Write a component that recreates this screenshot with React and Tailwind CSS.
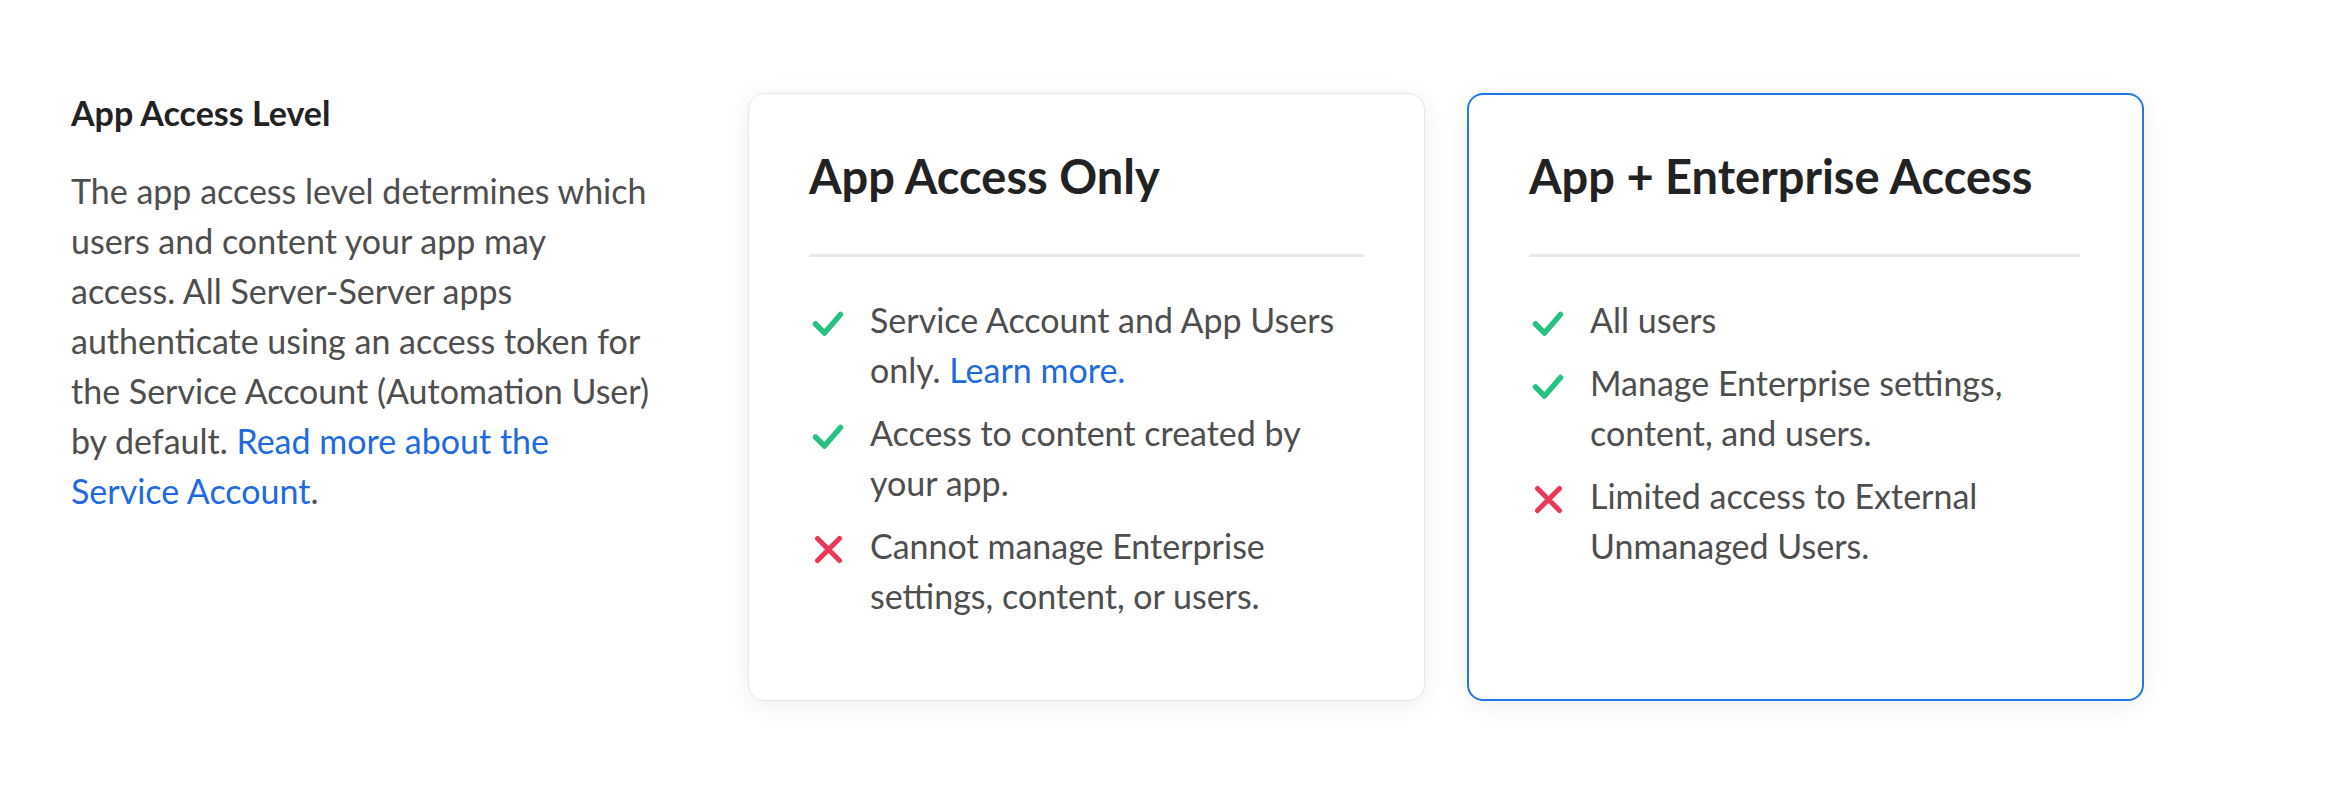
import React from "react";

const Check = () => (
  <svg width="36" height="36" viewBox="0 0 36 36" fill="none">
    <path
      d="M6.5 22L15.5 31L31.5 12.5"
      stroke="#26c281"
      strokeWidth="5.5"
      strokeLinecap="round"
      strokeLinejoin="round"
    />
  </svg>
);

const Cross = () => (
  <svg width="36" height="36" viewBox="0 0 36 36" fill="none">
    <path
      d="M8.5 10.5L30.5 32.5M30.5 10.5L8.5 32.5"
      stroke="#ed3757"
      strokeWidth="5"
      strokeLinecap="round"
    />
  </svg>
);

const Item = ({ ok, children }) => (
  <li className="flex">
    <div className="w-[61px] shrink-0 pt-[7px]">{ok ? <Check /> : <Cross />}</div>
    <div className="flex-1">{children}</div>
  </li>
);

const Card = ({ title, selected, children }) => (
  <div
    className={
      selected
        ? "w-[677px] rounded-[16px] border-2 border-[#2277e6] bg-white pl-[60px] pr-[62px] pt-[53px] pb-[78px] shadow-[0_4px_24px_rgba(0,0,0,0.07)]"
        : "w-[677px] rounded-[16px] border border-[#e6e6e6] bg-white pl-[60px] pr-[60px] pt-[54px] pb-[79px] shadow-[0_4px_24px_rgba(0,0,0,0.07)]"
    }
  >
    <h3 className="text-[47px] leading-[56px] font-bold text-[#222222]">{title}</h3>
    <div className="mt-[50px] h-[3px] bg-[#e8e8e8]" />
    <ul className="mt-[38px] flex flex-col gap-[13px] text-[34px] leading-[50px] text-[#4e4e4e]">
      {children}
    </ul>
  </div>
);

export default function App() {
  return (
    <div
      className="min-h-[790px] bg-white pl-[71px] pt-[93px]"
      style={{ fontFamily: "Lato, 'Open Sans', sans-serif" }}
    >
      <div className="flex items-stretch gap-[67px]">
        <div className="w-[610px] shrink-0">
          <h2 className="text-[34px] leading-[40px] font-bold text-[#222222]">App Access Level</h2>
          <p className="mt-[33px] text-[34px] leading-[50px] text-[#4e4e4e]">
            The app access level determines which
            <br />
            users and content your app may
            <br />
            access. All Server-Server apps
            <br />
            authenticate using an access token for
            <br />
            the Service Account (Automation User)
            <br />
            by default.{" "}
            <a href="#" className="text-[#1f6ae0]">
              Read more about the
              <br />
              Service Account
            </a>
            .
          </p>
        </div>
        <div className="flex items-stretch gap-[42px]">
          <Card title="App Access Only">
            <Item ok>
              Service Account and App Users only.{" "}
              <a href="#" className="text-[#1f6ae0]">
                Learn more.
              </a>
            </Item>
            <Item ok>Access to content created by your app.</Item>
            <Item>Cannot manage Enterprise settings, content, or users.</Item>
          </Card>
          <Card title="App + Enterprise Access" selected>
            <Item ok>All users</Item>
            <Item ok>Manage Enterprise settings, content, and users.</Item>
            <Item>Limited access to External Unmanaged Users.</Item>
          </Card>
        </div>
      </div>
    </div>
  );
}
